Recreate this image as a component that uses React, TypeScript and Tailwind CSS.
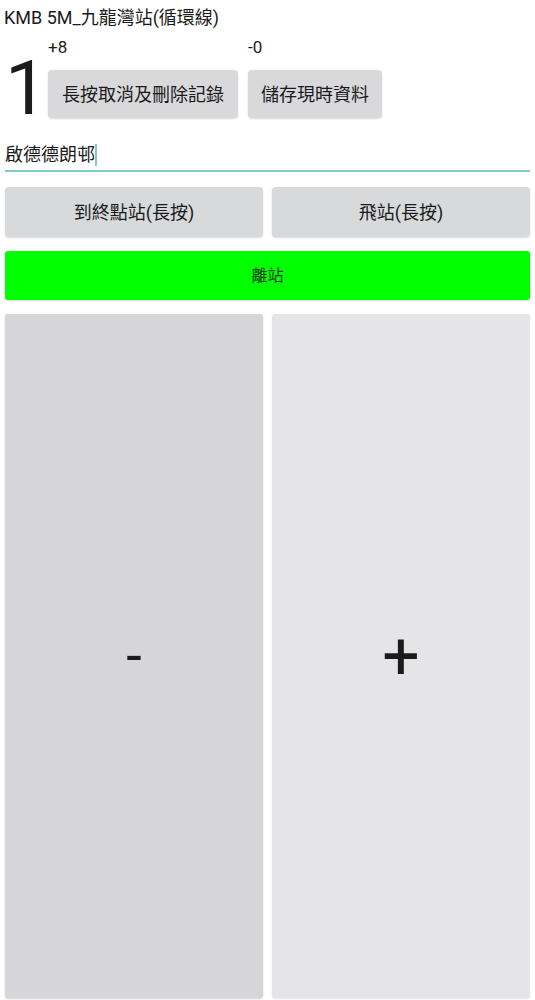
export default function App() {
  const font = { fontFamily: 'Roboto, "Noto Sans CJK TC", sans-serif' };
  return (
    <div className="flex h-[1000px] w-[535px] flex-col bg-white text-[#1b1b1b]" style={font}>
      <div className="px-[4px] pt-[5px] text-[18px] leading-[26px]">KMB 5M_九龍灣站(循環線)</div>

      <div className="flex items-start pl-[5px]">
        <div className="mt-[19px] w-[43px] text-[76px] leading-[76px]">1</div>
        <div className="flex flex-col pt-[5px]">
          <div className="flex">
            <span className="w-[200px] text-[17px] leading-[22px]">+8</span>
            <span className="text-[17px] leading-[22px]">-0</span>
          </div>
          <div className="mt-[12px] flex gap-[10px]">
            <button className="h-[48px] w-[190px] rounded-[4px] bg-[#d9d9db] text-[18px] shadow-[0_1px_2px_rgba(0,0,0,0.15)]">
              長按取消及刪除記錄
            </button>
            <button className="h-[48px] w-[134px] rounded-[4px] bg-[#d9d9db] text-[18px] shadow-[0_1px_2px_rgba(0,0,0,0.15)]">
              儲存現時資料
            </button>
          </div>
        </div>
      </div>

      <div className="mx-[5px] mt-[16px] flex items-center border-b-2 border-[#80cbc4] pb-[2px]">
        <span className="text-[18px] leading-[26px]">啟德德朗邨</span>
        <span className="h-[22px] w-[2px] bg-[#80cbc4]" />
      </div>

      <div className="mx-[5px] mt-[15px] grid grid-cols-2 gap-[9px]">
        <button className="h-[50px] rounded-[4px] bg-[#d8d9db] text-[18px] shadow-[0_1px_2px_rgba(0,0,0,0.15)]">
          到終點站(長按)
        </button>
        <button className="h-[50px] rounded-[4px] bg-[#d8d9db] text-[18px] shadow-[0_1px_2px_rgba(0,0,0,0.15)]">
          飛站(長按)
        </button>
      </div>

      <button className="mx-[5px] mt-[14px] h-[49px] rounded-[3px] bg-[#00ff00] text-[16px] text-[#1a3a1a] shadow-[0_1px_2px_rgba(0,0,0,0.15)]">
        離站
      </button>

      <div className="mx-[5px] mb-[2px] mt-[14px] grid flex-1 grid-cols-2 gap-[9px]">
        <button className="flex items-center justify-center rounded-[3px] bg-[#d6d6d8] text-[56px] shadow-[0_1px_2px_rgba(0,0,0,0.18)]">
          -
        </button>
        <button className="flex items-center justify-center rounded-[3px] bg-[#e5e4e7] text-[66px] shadow-[0_1px_2px_rgba(0,0,0,0.1)]">
          +
        </button>
      </div>
    </div>
  );
}
